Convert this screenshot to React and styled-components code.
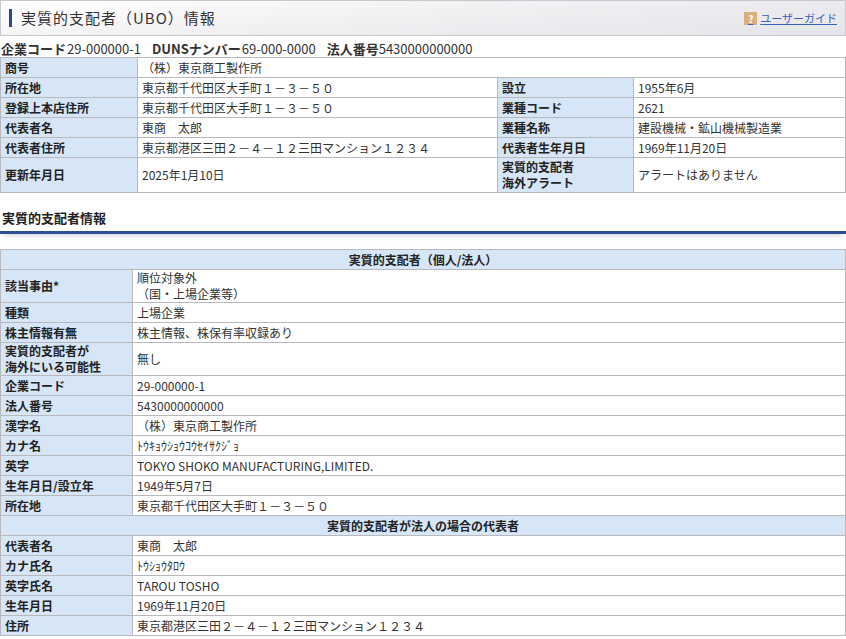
import React from "react";
import styled, { createGlobalStyle } from "styled-components";

const Global = createGlobalStyle`
  body { margin: 0; font-family: "Noto Sans CJK JP", "Noto Sans", sans-serif; font-size: 12px; color: #333; background: #fff; }
`;
const Header = styled.div`
  height: 34px; border: 1px solid #c8c8cc; display: flex; align-items: center; justify-content: space-between;
  background: linear-gradient(175deg, #ffffff 0%, #f1f1f3 45%, #e4e4ea 100%); padding: 0 8px 0 8px;
`;
const Title = styled.h1`
  margin: 0; font-size: 15px; font-weight: normal; color: #333; border-left: 3px solid #2a4a8a; padding-left: 9px; line-height: 18px; letter-spacing: 1px;
`;
const Guide = styled.a`
  display: flex; align-items: center; gap: 3px; color: #3a62b8; text-decoration: underline; font-size: 11px;
`;
const Q = styled.span`
  width: 13px; height: 13px; background: #d7b07c; color: #fff; font-size: 10px; font-weight: bold; display: inline-flex; align-items: center; justify-content: center;
`;
const Codes = styled.div`
  margin-top: 4px; padding-left: 1px; font-size: 13px; line-height: 17px; b { font-weight: bold; } span { margin-right: 8px; margin-left: 1px; }
`;
const Table = styled.table`
  width: 100%; border-collapse: collapse; table-layout: fixed;
  td, th { border: 1px solid #b9b9bd; padding: 0 4px; height: 19px; line-height: 16px; vertical-align: middle; font-size: 12px; }
`;
const Label = styled.th`
  background: #d6e6f7; text-align: left; font-weight: bold; color: #222;
`;
const Val = styled.td` color: #333; `;
const HeadCell = styled.th` background: #d6e6f7; text-align: center; font-weight: bold; color: #222; `;
const Section = styled.h2`
  margin: 15px 0 0; font-size: 13px; font-weight: bold; padding: 0 2px 4px; border-bottom: 3px solid #2c4f93; color: #222;
  box-shadow: 0 4px 6px -3px #ccd;
`;
const Spacer = styled.div` height: 15px; `;

const r1 = [
  ["商号", "（株）東京商工製作所"],
  ["所在地", "東京都千代田区大手町１－３－５０", "設立", "1955年6月"],
  ["登録上本店住所", "東京都千代田区大手町１－３－５０", "業種コード", "2621"],
  ["代表者名", "東商　太郎", "業種名称", "建設機械・鉱山機械製造業"],
  ["代表者住所", "東京都港区三田２－４－１２三田マンション１２３４", "代表者生年月日", "1969年11月20日"],
  ["更新年月日", "2025年1月10日", <>実質的支配者<br />海外アラート</>, "アラートはありません"],
];
const r2 = [
  [<>該当事由*</>, <>順位対象外<br />（国・上場企業等）</>],
  ["種類", "上場企業"],
  ["株主情報有無", "株主情報、株保有率収録あり"],
  [<>実質的支配者が<br />海外にいる可能性</>, "無し"],
  ["企業コード", "29-000000-1"],
  ["法人番号", "5430000000000"],
  ["漢字名", "（株）東京商工製作所"],
  ["カナ名", "ﾄｳｷｮｳｼｮｳｺｳｾｲｻｸｼﾞｮ"],
  ["英字", "TOKYO SHOKO MANUFACTURING,LIMITED."],
  ["生年月日/設立年", "1949年5月7日"],
  ["所在地", "東京都千代田区大手町１－３－５０"],
];
const r3 = [
  ["代表者名", "東商　太郎"],
  ["カナ氏名", "ﾄｳｼｮｳﾀﾛｳ"],
  ["英字氏名", "TAROU TOSHO"],
  ["生年月日", "1969年11月20日"],
  ["住所", "東京都港区三田２－４－１２三田マンション１２３４"],
];

export default function App() {
  return (
    <>
      <Global />
      <Header>
        <Title>実質的支配者（UBO）情報</Title>
        <Guide><Q>?</Q>ユーザーガイド</Guide>
      </Header>
      <Codes>
        <b>企業コード</b><span>29-000000-1</span> <b>DUNSナンバー</b><span>69-000-0000</span> <b>法人番号</b>5430000000000
      </Codes>
      <Table>
        <colgroup><col style={{ width: 137 }} /><col style={{ width: 360 }} /><col style={{ width: 136 }} /><col /></colgroup>
        <tbody>
          {r1.map((r, i) => (
            <tr key={i} style={i === 5 ? { height: 35 } : undefined}>
              <Label>{r[0]}</Label>
              {r.length === 2 ? <Val colSpan={3}>{r[1]}</Val> : <>
                <Val>{r[1]}</Val><Label>{r[2]}</Label><Val>{r[3]}</Val></>}
            </tr>
          ))}
        </tbody>
      </Table>
      <Section>実質的支配者情報</Section>
      <Spacer />
      <Table>
        <colgroup><col style={{ width: 132 }} /><col /></colgroup>
        <tbody>
          <tr><HeadCell colSpan={2}>実質的支配者（個人/法人）</HeadCell></tr>
          {r2.map((r, i) => <tr key={i}><Label>{r[0]}</Label><Val>{r[1]}</Val></tr>)}
          <tr><HeadCell colSpan={2}>実質的支配者が法人の場合の代表者</HeadCell></tr>
          {r3.map((r, i) => <tr key={i}><Label>{r[0]}</Label><Val>{r[1]}</Val></tr>)}
        </tbody>
      </Table>
    </>
  );
}
